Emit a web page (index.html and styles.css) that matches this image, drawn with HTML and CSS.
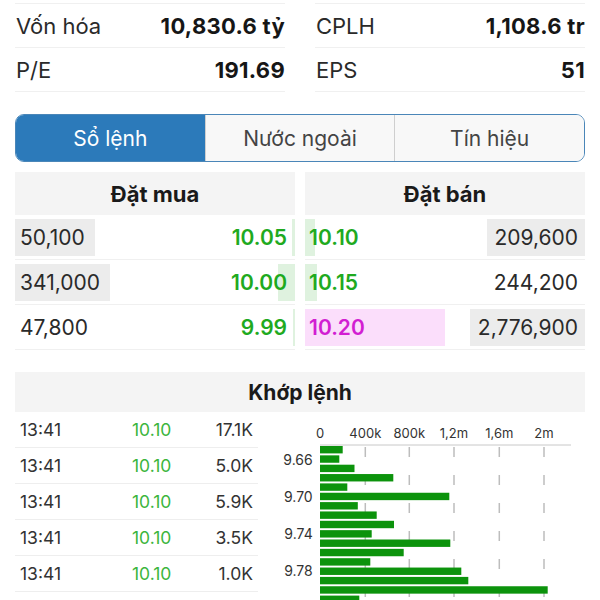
FILE: index.html
```html
<!DOCTYPE html>
<html>
<head>
  <meta charset="UTF-8">
  <link rel="stylesheet" href="styles.css">
</head>
<body>
  <!-- Stock stats -->
  <div class="stats">
    <div class="stat-col">
      <div class="stat-row"><span class="stat-label">Vốn hóa</span><span class="stat-value">10,830.6 tỷ</span></div>
      <div class="stat-row"><span class="stat-label">P/E</span><span class="stat-value">191.69</span></div>
    </div>
    <div class="stat-col">
      <div class="stat-row"><span class="stat-label">CPLH</span><span class="stat-value">1,108.6 tr</span></div>
      <div class="stat-row"><span class="stat-label">EPS</span><span class="stat-value">51</span></div>
    </div>
  </div>

  <!-- Tabs -->
  <div class="tabs">
    <div class="tab active">Sổ lệnh</div>
    <div class="tab">Nước ngoài</div>
    <div class="tab">Tín hiệu</div>
  </div>

  <!-- Order book -->
  <div class="book">
    <div class="book-side">
      <div class="book-head">Đặt mua</div>
      <div class="book-row">
        <div class="vol-cell" style="--w: 80px;">50,100</div>
        <div class="price-cell bid" style="--w: 3px;">10.05</div>
      </div>
      <div class="book-row">
        <div class="vol-cell" style="--w: 95px;">341,000</div>
        <div class="price-cell bid" style="--w: 17px;">10.00</div>
      </div>
      <div class="book-row">
        <div class="vol-cell" style="--w: 0px;">47,800</div>
        <div class="price-cell bid" style="--w: 2px;">9.99</div>
      </div>
    </div>
    <div class="book-side">
      <div class="book-head">Đặt bán</div>
      <div class="book-row">
        <div class="price-cell ask" style="--w: 10px;">10.10</div>
        <div class="vol-cell right" style="--w: 98px;">209,600</div>
      </div>
      <div class="book-row">
        <div class="price-cell ask" style="--w: 12px;">10.15</div>
        <div class="vol-cell right" style="--w: 0px;">244,200</div>
      </div>
      <div class="book-row">
        <div class="price-cell ask ceil" style="--w: 140px;">10.20</div>
        <div class="vol-cell right" style="--w: 115px;">2,776,900</div>
      </div>
    </div>
  </div>

  <!-- Matched orders -->
  <div class="match-head">Khớp lệnh</div>
  <div class="match-body">
    <div class="trades">
      <div class="trade-row"><span>13:41</span><span class="trade-price">10.10</span><span class="trade-vol">17.1K</span></div>
      <div class="trade-row"><span>13:41</span><span class="trade-price">10.10</span><span class="trade-vol">5.0K</span></div>
      <div class="trade-row"><span>13:41</span><span class="trade-price">10.10</span><span class="trade-vol">5.9K</span></div>
      <div class="trade-row"><span>13:41</span><span class="trade-price">10.10</span><span class="trade-vol">3.5K</span></div>
      <div class="trade-row"><span>13:41</span><span class="trade-price">10.10</span><span class="trade-vol">1.0K</span></div>
    </div>
    <svg class="chart" width="320" height="188" viewBox="0 0 320 188">
      <g class="axis-labels">
        <text x="40" y="25.5">0</text>
        <text x="85.3" y="25.5">400k</text>
        <text x="129.3" y="25.5">800k</text>
        <text x="174" y="25.5">1,2m</text>
        <text x="219.3" y="25.5">1,6m</text>
        <text x="264" y="25.5">2m</text>
      </g>
      <line class="axis" x1="40" y1="33" x2="291" y2="33"/>
      <g class="grid">
        <line x1="85.3" y1="35" x2="85.3" y2="188"/>
        <line x1="129.3" y1="35" x2="129.3" y2="188"/>
        <line x1="174" y1="35" x2="174" y2="188"/>
        <line x1="219.3" y1="35" x2="219.3" y2="188"/>
        <line x1="264" y1="35" x2="264" y2="188"/>
      </g>
      <g class="bars">
        <rect x="40" y="34" width="22.7" height="7.4"/>
        <rect x="40" y="43.35" width="19.3" height="7.4"/>
        <rect x="40" y="52.7" width="34.5" height="7.4"/>
        <rect x="40" y="62.05" width="73.3" height="7.4"/>
        <rect x="40" y="71.4" width="27.3" height="7.4"/>
        <rect x="40" y="80.75" width="129.3" height="7.4"/>
        <rect x="40" y="90.1" width="37.8" height="7.4"/>
        <rect x="40" y="99.45" width="56.7" height="7.4"/>
        <rect x="40" y="108.8" width="74" height="7.4"/>
        <rect x="40" y="118.15" width="51.7" height="7.4"/>
        <rect x="40" y="127.5" width="130.3" height="7.4"/>
        <rect x="40" y="136.85" width="83.7" height="7.4"/>
        <rect x="40" y="146.2" width="50.3" height="7.4"/>
        <rect x="40" y="155.55" width="141.3" height="7.4"/>
        <rect x="40" y="164.9" width="148.3" height="7.4"/>
        <rect x="40" y="174.25" width="227.7" height="7.4"/>
        <rect x="40" y="183.6" width="39.3" height="7.4"/>
      </g>
      <g class="price-labels">
        <text x="32.7" y="53">9.66</text>
        <text x="32.7" y="90">9.70</text>
        <text x="32.7" y="127">9.74</text>
        <text x="32.7" y="164">9.78</text>
      </g>
    </svg>
  </div>
</body>
</html>
```

FILE: styles.css
```css
body {
  margin: 0;
  width: 600px;
  height: 600px;
  overflow: hidden;
  background: #fff;
  color: #222;
  font-family: Inter, "Liberation Sans", sans-serif;
}

/* Stats */
.stats {
  display: grid;
  grid-template-columns: 1fr 1fr;
  column-gap: 30px;
  margin: 3px 15px 0;
}
.stat-col {
  border-top: 1px solid #f0f0f0;
}
.stat-row {
  display: flex;
  justify-content: space-between;
  align-items: center;
  height: 43px;
  border-bottom: 1px solid #f0f0f0;
  font-size: 22px;
}
.stat-label {
  padding-left: 1px;
  color: #2a2a2a;
}
.stat-value {
  font-weight: 700;
  color: #161616;
  letter-spacing: 0.3px;
}

/* Tabs */
.tabs {
  display: flex;
  margin: 22px 15px 0;
  height: 46px;
  border: 1px solid #4a86b8;
  border-radius: 9px;
  overflow: hidden;
}
.tab {
  flex: 1;
  display: flex;
  align-items: center;
  justify-content: center;
  font-size: 21px;
  color: #444;
  background: #f8f8f8;
  border-left: 1px solid #cfcfcf;
}
.tab:first-child {
  border-left: none;
}
.tab.active {
  background: #2c7aba;
  color: #fff;
}

/* Order book */
.book {
  display: grid;
  grid-template-columns: 1fr 1fr;
  column-gap: 10px;
  margin: 10px 15px 0;
}
.book-head {
  height: 43px;
  display: flex;
  align-items: center;
  justify-content: center;
  background: #f4f4f4;
  font-size: 22px;
  font-weight: 700;
  color: #1a1a1a;
}
.book-row {
  display: grid;
  grid-template-columns: 1fr 1fr;
  padding: 4px 0 3px;
  border-bottom: 1px solid #f0f0f0;
  font-size: 21px;
}
.vol-cell {
  height: 37px;
  display: flex;
  align-items: center;
  padding-left: 5px;
  white-space: nowrap;
  color: #2a2a2a;
  background: linear-gradient(to right, #ececec var(--w), transparent var(--w));
}
.vol-cell.right {
  justify-content: flex-end;
  padding-left: 0;
  padding-right: 7px;
  background: linear-gradient(to left, #ececec var(--w), transparent var(--w));
}
.price-cell {
  height: 37px;
  display: flex;
  align-items: center;
  font-weight: 600;
  color: #1faa1f;
}
.price-cell.bid {
  justify-content: flex-end;
  padding-right: 8px;
  background: linear-gradient(to left, #dff2df var(--w), transparent var(--w));
}
.price-cell.ask {
  padding-left: 4px;
  background: linear-gradient(to right, #dff2df var(--w), transparent var(--w));
}
.price-cell.ceil {
  color: #d21ed2;
  background: linear-gradient(to right, #fbdefb var(--w), transparent var(--w));
}

/* Matched orders */
.match-head {
  margin: 22px 15px 0;
  height: 40px;
  display: flex;
  align-items: center;
  justify-content: center;
  background: #f4f4f4;
  font-size: 21px;
  font-weight: 700;
  color: #1a1a1a;
}
.match-body {
  display: flex;
}
.trades {
  width: 243px;
  margin-left: 15px;
}
.trade-row {
  display: grid;
  grid-template-columns: 112px 60px 1fr;
  align-items: center;
  height: 35px;
  padding: 0 5px;
  border-bottom: 1px solid #eeeeee;
  font-size: 17.5px;
  color: #333;
}
.trade-price {
  color: #3cb53c;
}
.trade-vol {
  text-align: right;
}
.chart {
  display: block;
  margin-left: 22px;
}
.axis-labels text {
  font-size: 13px;
  fill: #333;
  text-anchor: middle;
}
.price-labels text {
  font-size: 14px;
  fill: #333;
  text-anchor: end;
}
.axis {
  stroke: #c8c8c8;
  stroke-width: 1;
}
.grid line {
  stroke: #bdbdbd;
  stroke-width: 1.5;
  stroke-dasharray: 10 18;
}
.bars rect {
  fill: #0c930c;
}
```
